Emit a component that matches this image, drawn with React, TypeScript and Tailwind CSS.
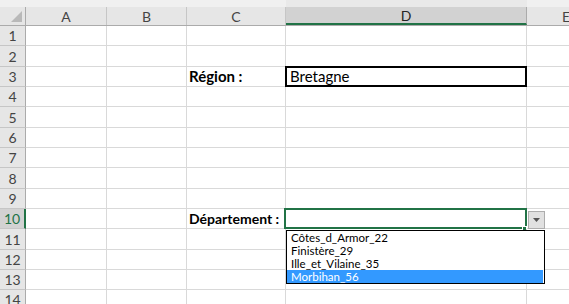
import React from 'react'

const rowHeights = [20, 21, 20, 20, 21, 20, 20, 21, 20, 20, 21, 20, 20, 20]

const items = ['Côtes_d_Armor_22', 'Finistère_29', 'Ille_et_Vilaine_35', 'Morbihan_56']

const font = { fontFamily: 'Lato, "Liberation Sans", sans-serif' }

function HeaderCell({ label, width, active }: { label: string; width: string; active?: boolean }) {
  return (
    <div
      className={`${width} h-full shrink-0 flex items-center justify-center border-r text-[14px] ${
        active
          ? 'bg-[#d2d2d2] border-[#ababab] text-[#262626] border-b-2 border-b-[#217346]'
          : 'bg-[#e6e6e6] border-[#c6c6c6] text-[#444]'
      }`}
    >
      {label}
    </div>
  )
}

export default function App() {
  return (
    <div className="w-[569px] h-[304px] overflow-hidden bg-white select-none" style={font}>
      {/* top strip */}
      <div className="h-[7px] bg-[#f0f0f0] flex">
        <div className="w-[286px] h-full" />
        <div className="w-[241px] h-full bg-[#e9e9e9]" />
      </div>

      {/* column headers */}
      <div className="h-[19px] flex border-b border-[#ababab]">
        <div className="w-[26px] h-full shrink-0 bg-[#e6e6e6] border-r border-[#ababab] relative">
          <svg className="absolute right-[3px] bottom-[3px]" width="11" height="11" viewBox="0 0 11 11">
            <polygon points="11,0 11,11 0,11" fill="#b9b9b9" />
          </svg>
        </div>
        <HeaderCell label="A" width="w-[81px]" />
        <HeaderCell label="B" width="w-[80px]" />
        <HeaderCell label="C" width="w-[99px]" />
        <HeaderCell label="D" width="w-[241px]" active />
        <div className="flex-1 h-full bg-[#e6e6e6] text-[14px] text-[#444] pl-[35px] flex items-center">E</div>
      </div>

      {/* rows */}
      {rowHeights.map((h, i) => {
        const n = i + 1
        const active = n === 10
        return (
          <div key={n} className="flex" style={{ height: h }}>
            <div
              className={`w-[26px] shrink-0 flex items-center justify-center text-[14px] border-b border-b-[#c6c6c6] ${
                active
                  ? 'bg-[#d2d2d2] text-[#217346] border-r-2 border-r-[#217346]'
                  : 'bg-[#e6e6e6] text-[#444] border-r border-r-[#ababab]'
              }`}
            >
              {n}
            </div>
            <div className="w-[81px] shrink-0 border-r border-b border-[#d9d9d9]" />
            <div className="w-[80px] shrink-0 border-r border-b border-[#d9d9d9]" />
            <div className="w-[99px] shrink-0 border-r border-b border-[#d9d9d9] flex items-center pl-[2px] text-[15px] font-bold text-black whitespace-nowrap">
              {n === 3 && 'Région :'}
              {n === 10 && <span className="text-[14px]">Département :</span>}
            </div>
            <div className="w-[241px] shrink-0 border-r border-b border-[#d9d9d9] relative flex items-center pl-[4px] text-[15px] text-black">
              {n === 3 && (
                <>
                  <div className="absolute -top-px -left-px -right-px -bottom-px border-2 border-black" />
                  <span className="relative">Bretagne</span>
                </>
              )}
              {n === 10 && (
                <>
                  <div className="absolute -top-px -left-[2px] -right-px -bottom-px border-2 border-[#217346]" />
                  <div className="absolute -right-[1px] -bottom-[3px] w-[5px] h-[5px] bg-[#217346] border border-white" />
                  {/* dropdown arrow */}
                  <div className="absolute left-[242px] top-[2px] w-[17px] h-[18px] bg-[#e1e1e1] border border-[#adadad] flex items-center justify-center z-10">
                    <svg width="7" height="4" viewBox="0 0 7 4">
                      <polygon points="0,0 7,0 3.5,4" fill="#555" />
                    </svg>
                  </div>
                  {/* list */}
                  <div className="absolute left-0 top-[21px] w-[259px] bg-white border border-black z-10 flex flex-col text-[11.5px] leading-[13px] font-normal">
                    {items.map((it, k) => (
                      <div
                        key={it}
                        className={`h-[13px] pl-[4px] flex items-center whitespace-nowrap ${
                          k === 3 ? 'bg-[#3399ff] text-white mr-px' : 'text-black'
                        }`}
                      >
                        {it}
                      </div>
                    ))}
                  </div>
                </>
              )}
            </div>
            <div className="flex-1 border-b border-[#d9d9d9]" />
          </div>
        )
      })}
    </div>
  )
}
